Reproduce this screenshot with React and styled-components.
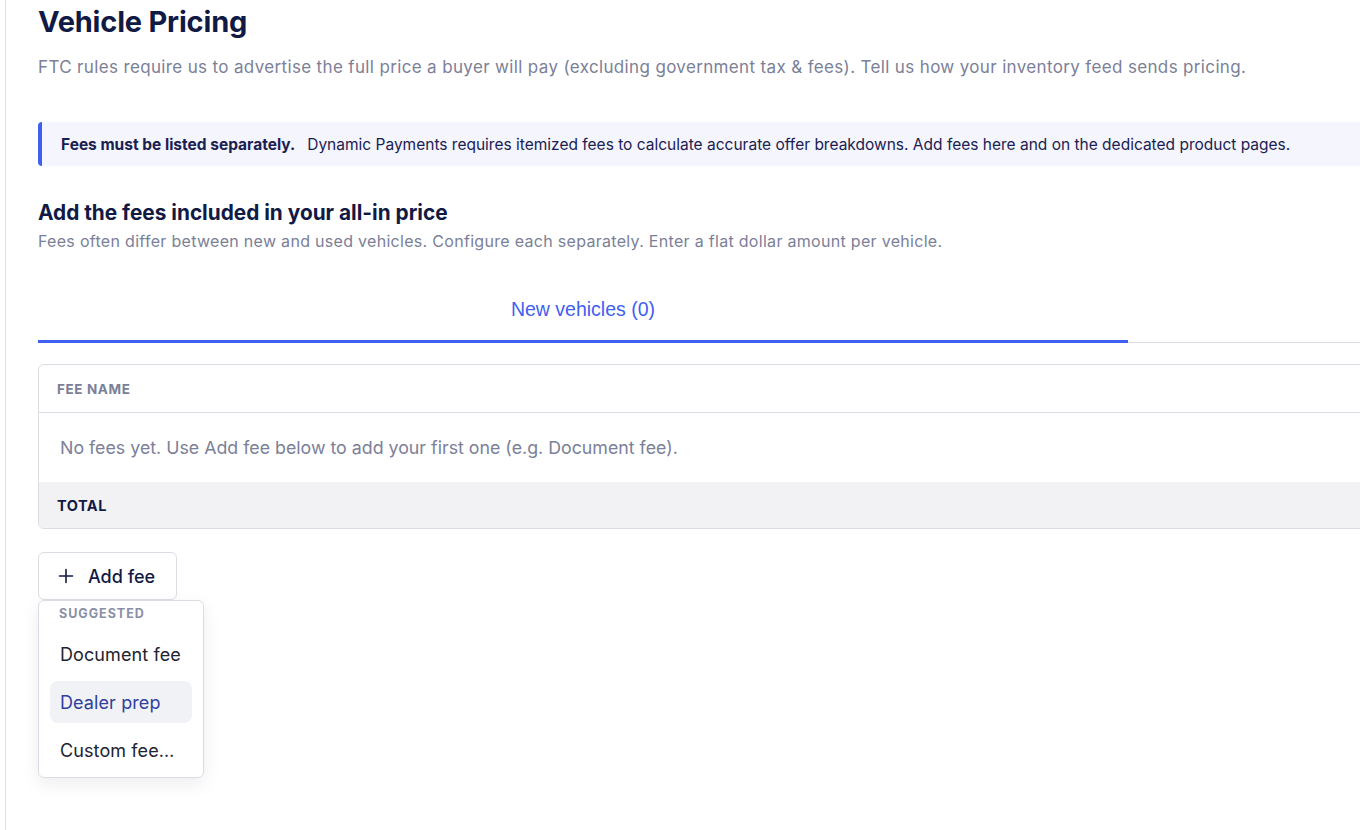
import React from "react";
import styled, { createGlobalStyle } from "styled-components";

const Global = createGlobalStyle`
  html, body { margin: 0; padding: 0; background: #fff; overflow: hidden; }
  body { font-family: Inter, "Noto Sans", sans-serif; -webkit-font-smoothing: antialiased; }
  * { box-sizing: border-box; }
`;

const Page = styled.div`
  display: flex;
  min-height: 830px;
  padding-left: 5px;
`;

const Main = styled.main`
  border-left: 1px solid #e2e2e6;
  padding: 4px 0 40px 32px;
  width: 2220px;
  flex-shrink: 0;
  display: flex;
  flex-direction: column;
`;

const Title = styled.h1`
  margin: 0;
  font-size: 29px;
  line-height: 36px;
  font-weight: 700;
  color: #111a45;
  letter-spacing: -0.2px;
`;

const Lead = styled.p`
  margin: 14px 0 0;
  font-size: 17px;
  letter-spacing: 0.35px;
  line-height: 26px;
  color: #7b8098;
`;

const Banner = styled.div`
  margin-top: 42px;
  height: 44px;
  display: flex;
  align-items: center;
  gap: 12px;
  padding-left: 19px;
  background: #f4f5fd;
  border-left: 4px solid #3f5ff0;
  border-radius: 4px 0 0 4px;
  font-size: 15.5px;
  color: #1a2152;
`;

const BannerStrong = styled.strong`
  font-weight: 700;
`;

const SectionTitle = styled.h2`
  margin: 34px 0 0;
  font-size: 20.8px;
  line-height: 26px;
  font-weight: 700;
  color: #111a45;
`;

const SectionText = styled.p`
  margin: 4px 0 0;
  font-size: 16px;
  letter-spacing: 0.3px;
  line-height: 22px;
  color: #7b8098;
`;

const TabList = styled.div`
  margin-top: 27px;
  display: flex;
  border-bottom: 1px solid #dcdde4;
`;

const Tab = styled.button`
  width: 1090px;
  height: 64px;
  padding: 0;
  background: none;
  border: 0;
  margin-bottom: -1px;
  border-bottom: 3px solid ${(p) => (p.$active ? "#3f5ff0" : "transparent")};
  font-family: "Liberation Sans", Arial, sans-serif;
  font-size: 19.5px;
  color: ${(p) => (p.$active ? "#3f5ff0" : "#7b8098")};
  cursor: pointer;
`;

const Table = styled.div`
  margin-top: 21px;
  border: 1px solid #dcdde4;
  border-radius: 6px;
  overflow: hidden;
`;

const HeadRow = styled.div`
  height: 48px;
  display: flex;
  align-items: center;
  padding-left: 18px;
  border-bottom: 1px solid #dcdde4;
  font-size: 13.5px;
  font-weight: 700;
  letter-spacing: 0.6px;
  color: #7b8098;
  text-transform: uppercase;
`;

const EmptyRow = styled.div`
  height: 69px;
  display: flex;
  align-items: center;
  padding-left: 21px;
  font-size: 17.8px;
  color: #7b8098;
`;

const TotalRow = styled.div`
  height: 46px;
  display: flex;
  align-items: center;
  padding-left: 18px;
  background: #f2f2f5;
  font-size: 14.5px;
  font-weight: 700;
  letter-spacing: 0.5px;
  color: #111a45;
`;

const AddArea = styled.div`
  margin-top: 23px;
  position: relative;
  align-self: flex-start;
`;

const AddButton = styled.button`
  height: 48px;
  display: flex;
  align-items: center;
  gap: 14px;
  padding: 0 21px 0 19px;
  background: #fff;
  border: 1px solid #dcdde4;
  border-radius: 6px;
  font-family: Inter, sans-serif;
  font-size: 18px;
  font-weight: 500;
  color: #111a45;
  cursor: pointer;
`;

const Menu = styled.div`
  position: absolute;
  top: 48px;
  left: 0;
  width: 166px;
  padding: 5px 11px 6px;
  background: #fff;
  border: 1px solid #dcdde4;
  border-radius: 6px;
  box-shadow: 0 6px 18px rgba(20, 25, 60, 0.08);
  display: flex;
  flex-direction: column;
  gap: 6px;
`;

const MenuLabel = styled.div`
  padding: 0 0 0 9px;
  height: 18px;
  font-size: 12.5px;
  font-weight: 700;
  letter-spacing: 1px;
  color: #8a8fa6;
  margin-bottom: 3px;
`;

const MenuItem = styled.div`
  height: 42px;
  display: flex;
  align-items: center;
  padding-left: 10px;
  border-radius: 8px;
  font-size: 18px;
  letter-spacing: 0.1px;
  color: ${(p) => (p.$active ? "#2f3f9e" : "#222330")};
  background: ${(p) => (p.$active ? "#f1f2f6" : "transparent")};
  white-space: nowrap;
`;

const PlusIcon = () => (
  <svg width="16" height="16" viewBox="0 0 16 16" fill="none" stroke="#111a45" strokeWidth="1.6" strokeLinecap="round">
    <path d="M8 1.5v13M1.5 8h13" />
  </svg>
);

export default function App() {
  return (
    <>
      <Global />
      <Page>
        <Main>
          <Title>Vehicle Pricing</Title>
          <Lead>
            FTC rules require us to advertise the full price a buyer will pay (excluding government tax &amp; fees). Tell us how your inventory feed sends pricing.
          </Lead>
          <Banner>
            <BannerStrong>Fees must be listed separately.</BannerStrong>
            <span>
              Dynamic Payments requires itemized fees to calculate accurate offer breakdowns. Add fees here and on the dedicated product pages.
            </span>
          </Banner>
          <SectionTitle>Add the fees included in your all-in price</SectionTitle>
          <SectionText>
            Fees often differ between new and used vehicles. Configure each separately. Enter a flat dollar amount per vehicle.
          </SectionText>
          <TabList>
            <Tab $active>New vehicles (0)</Tab>
          </TabList>
          <Table>
            <HeadRow>Fee name</HeadRow>
            <EmptyRow>No fees yet. Use Add fee below to add your first one (e.g. Document fee).</EmptyRow>
            <TotalRow>TOTAL</TotalRow>
          </Table>
          <AddArea>
            <AddButton>
              <PlusIcon />
              Add fee
            </AddButton>
            <Menu>
              <MenuLabel>SUGGESTED</MenuLabel>
              <MenuItem>Document fee</MenuItem>
              <MenuItem $active>Dealer prep</MenuItem>
              <MenuItem>Custom fee…</MenuItem>
            </Menu>
          </AddArea>
        </Main>
      </Page>
    </>
  );
}
